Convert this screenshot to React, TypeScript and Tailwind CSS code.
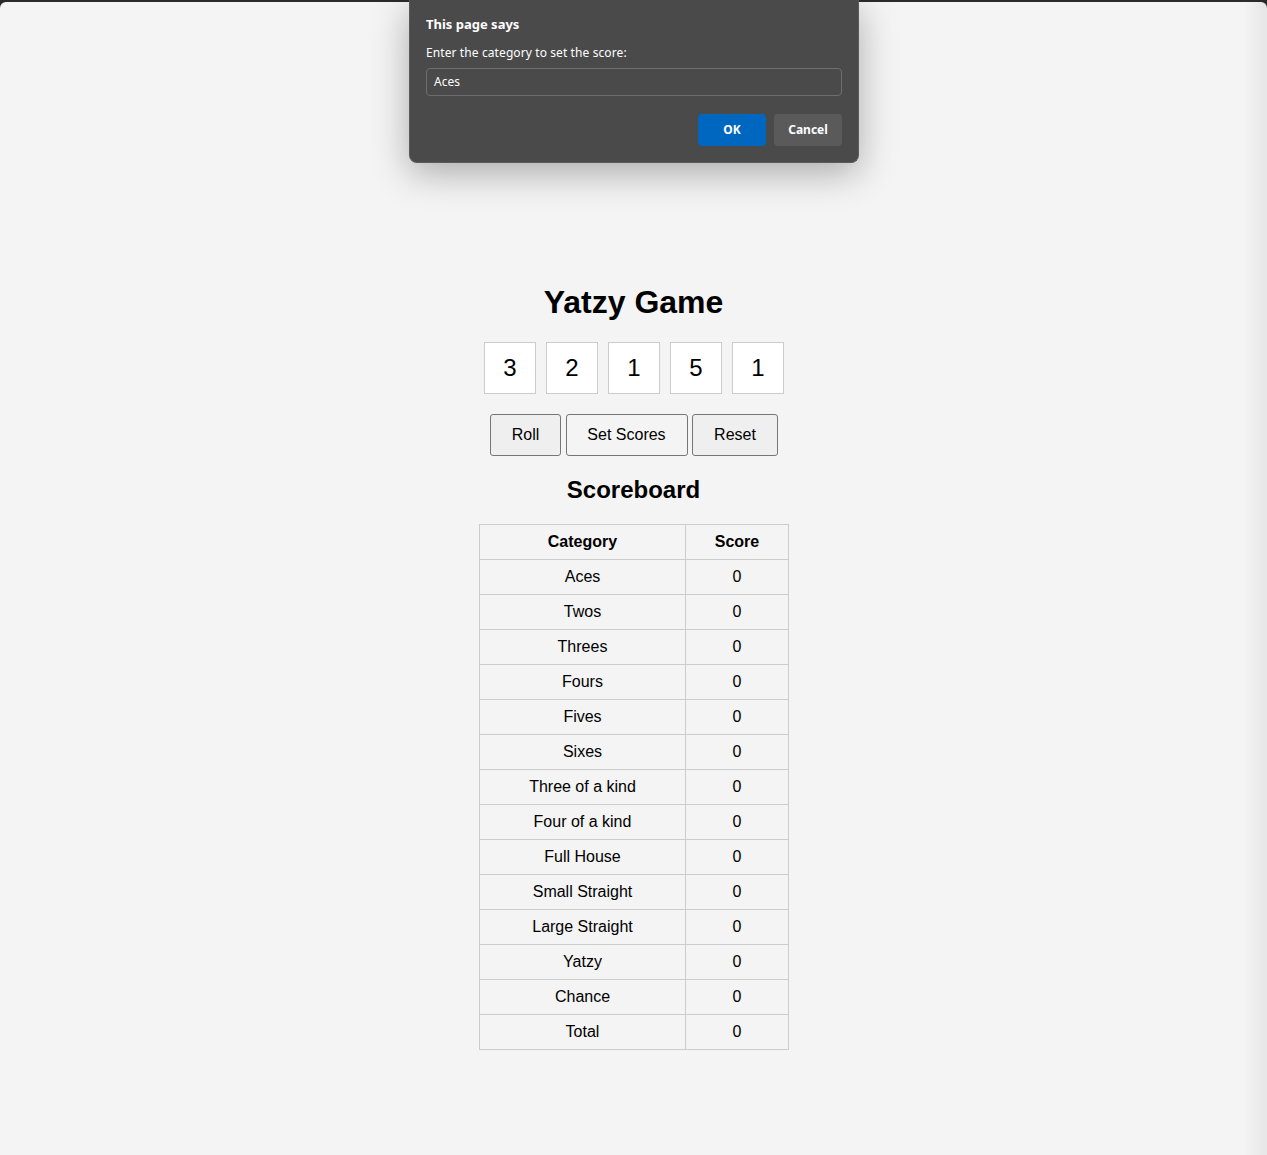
import React from "react";

const rows: [string, number][] = [
  ["Aces", 0],
  ["Twos", 0],
  ["Threes", 0],
  ["Fours", 0],
  ["Fives", 0],
  ["Sixes", 0],
  ["Three of a kind", 0],
  ["Four of a kind", 0],
  ["Full House", 0],
  ["Small Straight", 0],
  ["Large Straight", 0],
  ["Yatzy", 0],
  ["Chance", 0],
  ["Total", 0],
];

const dice = [3, 2, 1, 5, 1];

export default function App() {
  return (
    <div className="w-[1267px] h-[1155px] bg-[#2b2b2b] overflow-hidden relative">
      <div
        className="mt-[2px] h-[1153px] rounded-t-[6px] bg-[#f4f4f4] flex flex-col items-center pt-[282px] text-black"
        style={{ fontFamily: '"Liberation Sans", Arial, sans-serif' }}
      >
        <h1 className="text-[32px] leading-[37px] font-bold mb-[21px]">Yatzy Game</h1>
        <div className="flex gap-[10px] mb-[20px]">
          {dice.map((d, i) => (
            <div
              key={i}
              className="w-[52px] h-[52px] border border-[#cccccc] bg-white flex items-center justify-center text-[24px] pl-[1px]"
            >
              {d}
            </div>
          ))}
        </div>
        <div className="flex gap-[4.5px] mb-[20px] ml-[1px]">
          <button className="w-[71px] h-[42px] border border-[#767676] rounded-[3px] bg-[#efefef] text-[16px] text-black">
            Roll
          </button>
          <button className="w-[122px] h-[42px] border border-[#767676] rounded-[3px] bg-[#f4f4f4] text-[16px] text-black">
            Set Scores
          </button>
          <button className="w-[86px] h-[42px] border border-[#767676] rounded-[3px] bg-[#efefef] text-[16px] text-black">
            Reset
          </button>
        </div>
        <h2 className="text-[24px] leading-[28px] font-bold mb-[20px]">Scoreboard</h2>
        <table className="border-collapse w-[310px] ml-[1px] text-[16px]">
          <thead>
            <tr className="h-[35px]">
              <th className="border border-[#cccccc] w-[206px] font-bold text-center p-0">Category</th>
              <th className="border border-[#cccccc] font-bold text-center p-0">Score</th>
            </tr>
          </thead>
          <tbody>
            {rows.map(([name, score]) => (
              <tr key={name} className="h-[35px]">
                <td className="border border-[#cccccc] text-center p-0">{name}</td>
                <td className="border border-[#cccccc] text-center p-0">{score}</td>
              </tr>
            ))}
          </tbody>
        </table>
      </div>

      <div className="absolute top-0 right-0 w-[24px] h-full bg-gradient-to-r from-transparent to-[rgba(0,0,0,0.06)] pointer-events-none" />

      <div
        className="absolute left-[409px] top-0 w-[450px] h-[163px] bg-[#4a4a4a] rounded-b-[8px] shadow-[0_10px_36px_rgba(0,0,0,0.3)] border border-t-0 border-[#5a5a5a] px-[16px] pt-[16px] text-white"
        style={{ fontFamily: '"Noto Sans", "Open Sans", sans-serif' }}
      >
        <div className="text-[13px] leading-[16px] font-bold">This page says</div>
        <div className="mt-[13px] text-[12px] leading-[16px] tracking-[0.1px]">Enter the category to set the score:</div>
        <div className="mt-[7px] h-[28px] w-[416px] border border-[#6e6e6e] rounded-[4px] flex items-center px-[7px] text-[12px]">
          Aces
        </div>
        <div className="mt-[18px] flex justify-end gap-[8px] w-[416px]">
          <div className="w-[68px] h-[32px] rounded-[4px] bg-[#0067c0] flex items-center justify-center text-[12px] font-bold">
            OK
          </div>
          <div className="w-[68px] h-[32px] rounded-[4px] bg-[#5a5a5a] flex items-center justify-center text-[12px] font-bold">
            Cancel
          </div>
        </div>
      </div>
    </div>
  );
}
